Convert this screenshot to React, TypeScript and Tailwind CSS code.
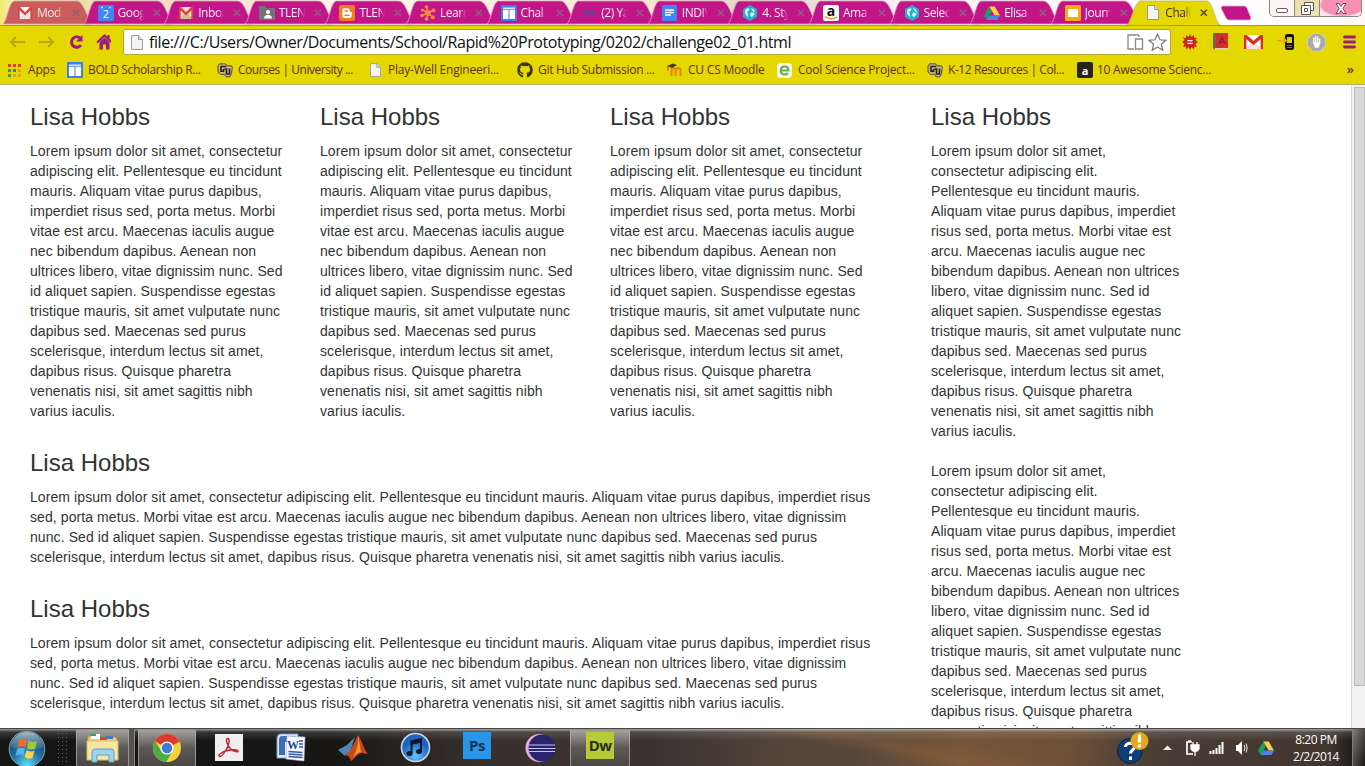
import React from "react";
import { FaGithub } from "react-icons/fa";

type P = { s?: number };

const Doc = ({ w = 12, h = 15 }: { w?: number; h?: number }) => (
  <svg width={w} height={h} viewBox="0 0 12 15" className="shrink-0">
    <path d="M.5.5h7l4 4v10H.5z" fill="#f3f3f3" stroke="#9b9b9b" />
    <path d="M7.5.5v4h4" fill="#ddd" stroke="#9b9b9b" />
  </svg>
);
const Gmail = ({ dark = "#d8483f", w = 14, h = 12, tan = false }: { dark?: string; w?: number; h?: number; tan?: boolean }) => (
  <svg width={w} height={h} viewBox="0 0 18 14" preserveAspectRatio="none" className="shrink-0">
    <rect width="18" height="14" rx="1" fill={tan ? "#f1e3c4" : "#fff"} />
    <path d="M0 14L7 7l2 2 2-2 7 7z" fill={tan ? "#d5bf8c" : "#f6e4e2"} />
    <path d="M0 0h2.600L9 6l6.400-6H18v14h-2.200V4L9 10 2.200 4v10H0z" fill={dark} />
  </svg>
);
const Calendar = () => (
  <svg width="16" height="16" viewBox="0 0 16 16">
    <rect width="16" height="16" rx="1" fill="#4486f0" />
    <path d="M3 2.500h2M11 2.500h2" stroke="#cfe0ff" strokeWidth="1.500" />
    <text x="8" y="13" fontSize="11" textAnchor="middle" fill="#fff" fontFamily="Open Sans, sans-serif">2</text>
  </svg>
);
const Classroom = () => (
  <svg width="16" height="16" viewBox="0 0 16 16">
    <path d="M0 1h6l1 2h9v12H0z" fill="#727477" />
    <circle cx="9" cy="7" r="2" fill="#fff" />
    <path d="M5 13.500c0-5 8-5 8 0z" fill="#fff" />
  </svg>
);
const Blogger = () => (
  <svg width="16" height="16" viewBox="0 0 16 16">
    <rect width="16" height="16" rx="2.500" fill="#f57d20" />
    <path d="M5.500 3.200h3a2.300 2.300 0 012.300 2.300c0 1.200.3 1.500 1.200 1.500.5 0 .8.300.8.800v2.500a2.600 2.600 0 01-2.600 2.600H5.800a2.600 2.600 0 01-2.600-2.600V5.500a2.300 2.300 0 012.300-2.300z" fill="#fff" />
    <path d="M6 6h2.500M6 10.200h4" stroke="#f57d20" strokeWidth="1.400" strokeLinecap="round" />
  </svg>
);
const Spokes = () => (
  <svg width="16" height="16" viewBox="0 0 16 16">
    <path d="M8 8L6.500 2M8 8l5-2.500M8 8l4.500 4M8 8l-1.500 6M8 8L2 10.500M8 8L2.500 5" stroke="#f28a3c" strokeWidth="1.600" />
    <g fill="#f28a3c"><circle cx="8" cy="8" r="3" /><circle cx="6.500" cy="2" r="1.800" /><circle cx="13.500" cy="5.500" r="2" /><circle cx="12.800" cy="12.300" r="2" /><circle cx="6.500" cy="14" r="1.800" /><circle cx="2" cy="10.500" r="1.800" /><circle cx="2.300" cy="5" r="1.500" /></g>
  </svg>
);
const Grid = ({ s = 16 }: P) => (
  <svg width={s} height={s} viewBox="0 0 16 16" className="shrink-0">
    <rect width="16" height="16" rx="1" fill="#3f7fea" />
    <path d="M2 5h5.500v9H2zM8.500 5H14v9H8.500z" fill="#fff" />
    <path d="M2 2.500h12v1.800H2z" fill="#dfe9fc" />
  </svg>
);
const Yahoo = () => (
  <svg width="16" height="16" viewBox="0 0 16 16">
    <path d="M1 4l4 4 2-4M5 8v4M8 7h3M8 10l3-4 2 5M12 7h3" fill="none" stroke="#5a489a" strokeWidth="1.700" />
  </svg>
);
const DocsIcon = () => (
  <svg width="15" height="16" viewBox="0 0 15 16">
    <rect width="15" height="16" rx="1" fill="#4285f4" />
    <path d="M3 5h9M3 7.500h9M3 10h6" stroke="#fff" strokeWidth="1.300" />
  </svg>
);
const Hex = () => (
  <svg width="16" height="16" viewBox="0 0 16 16">
    <path d="M8 0l7 4v8l-7 4-7-4V4z" fill="#28aecb" />
    <path d="M3 7c0-3 2.500-4.500 4-3.500s-.5 2-1.500 3 1.500 3 .5 5.500c-1.500-1-3-3-3-5zM9 3c2 .3 3.500 2 4 4l-2-.5zM9 7.500l3.500.5c0 2-1.500 3.500-3 4L8 10z" fill="#dff7fb" />
  </svg>
);
const Amazon = () => (
  <svg width="16" height="16" viewBox="0 0 16 16">
    <rect width="16" height="16" rx="2.500" fill="#fff" />
    <text x="8" y="10.500" fontSize="14" fontWeight="700" textAnchor="middle" fill="#111" fontFamily="Open Sans, sans-serif">a</text>
    <path d="M2 11.500c3.500 3 8.500 3 12 .3" stroke="#f79b1c" strokeWidth="1.600" fill="none" />
  </svg>
);
const Drive = ({ s = 16 }: P) => (
  <svg width={s} height={s} viewBox="0 0 16 16" className="shrink-0">
    <path d="M5.300 1.500L0 10.500 2.700 15 8 6z" fill="#17a35b" />
    <path d="M5.300 1.500h5.400L16 10.500h-5.300z" fill="#fdcf48" />
    <path d="M5.400 10.500H16L13.300 15H2.700z" fill="#4a86e8" />
  </svg>
);
const Slides = () => (
  <svg width="16" height="16" viewBox="0 0 16 16">
    <rect width="16" height="16" rx="1.500" fill="#f9ab13" />
    <rect x="3" y="4" width="10" height="8" fill="#fff" />
  </svg>
);
const CU = () => (
  <svg width="16" height="15" viewBox="0 0 16 15" className="shrink-0">
    <path d="M2.500.8h6l1.500 2h4.500l.8 1.500-.8 6-1.500 3.500H9l-1.500-2.500H3.500L1 9V3z" fill="#c4b184" stroke="#574a3a" />
    <path d="M8.500 4.200V3.500H4v4.800h3M6.500 6v3M7.500 6h2v5h3V5.500" fill="none" stroke="#2b241c" strokeWidth="1.600" />
  </svg>
);
const Moodle = () => (
  <svg width="16" height="14" viewBox="0 0 16 14" className="shrink-0">
    <path d="M4.500 13V7c0-2.500 4-2.500 4 0v6M8.500 7c0-2.500 5-2.500 5 0v6" fill="none" stroke="#e8841a" strokeWidth="2.200" />
    <path d="M0 3l6-2.500L10 2 5 5z" fill="#463a20" />
    <path d="M1 3v5" stroke="#7a5a20" />
  </svg>
);
const Apps = () => (
  <svg width="13" height="13" viewBox="0 0 13 13" className="shrink-0">
    {["#d9432f", "#d9432f", "#d9432f", "#3c9b4c", "#3a74d8", "#e8a01c", "#3c9b4c", "#e8a01c", "#e8a01c"].map((c, i) => (
      <rect key={i} x={(i % 3) * 5} y={Math.floor(i / 3) * 5} width="3" height="3" fill={c} />
    ))}
  </svg>
);

const tabs: { t: string; i: React.ReactNode; c: string }[] = [
  { t: "Mod", i: <Gmail />, c: "#cb5c5a" },
  { t: "Goog", i: <Calendar />, c: "#c21688" },
  { t: "Inbox", i: <Gmail tan />, c: "#c21688" },
  { t: "TLEN", i: <Classroom />, c: "#c21688" },
  { t: "TLEN", i: <Blogger />, c: "#c21688" },
  { t: "Learn", i: <Spokes />, c: "#c21688" },
  { t: "Chal", i: <Grid />, c: "#c21688" },
  { t: "(2) Ya", i: <Yahoo />, c: "#c21688" },
  { t: "INDIV", i: <DocsIcon />, c: "#c21688" },
  { t: "4. Sty", i: <Hex />, c: "#c21688" },
  { t: "Ama", i: <Amazon />, c: "#c21688" },
  { t: "Selec", i: <Hex />, c: "#c21688" },
  { t: "Elisa", i: <Drive />, c: "#c21688" },
  { t: "Journ", i: <Slides />, c: "#c21688" },
  { t: "Chall", i: <Doc />, c: "#e4d800" },
];

const Tab = ({ t, i, c, active }: { t: string; i: React.ReactNode; c: string; active: boolean }) => (
  <div className="grid h-[25px] w-[80.6px] shrink-0">
    <svg width="92" height="25" viewBox="0 0 92 25" className="overflow-visible [grid-area:1/1]">
      <path d={active ? "M-2 25.500C2 22 6 2 11 1H78C84 2 86 24 92 25.500Z" : "M2 24C6 21 8 2 13 1H76C83 2 86 18 91 24Z"} fill={c} stroke={active ? "#c5b74e" : "#dba0c0"} strokeWidth=".8" />
    </svg>
    <div className="flex h-[25px] items-center pl-[16px] [grid-area:1/1]">
      <div className="flex w-4 shrink-0 justify-center">{i}</div>
      <div className={`ml-1 w-[26px] overflow-hidden whitespace-nowrap text-[12px] leading-[18px] tracking-[-0.45px] [mask-image:linear-gradient(to_right,black_75%,transparent)] ${active ? "text-[#4f2d20]" : "text-[#fbe9f5]"}`}>{t}</div>
      <svg width="8" height="8" viewBox="0 0 8 8" className="ml-[9px] shrink-0">
        <path d="M.8.8l6 6M6.800.8l-6 6" stroke={active ? "#5e4a1c" : "#8f5f82"} strokeWidth="1.600" />
      </svg>
    </div>
  </div>
);

const marks = [
  { t: "Apps", i: <Apps />, w: "w-[59px]", g: "gap-[7px]", k: "tracking-[-0.2px]" },
  { t: "BOLD Scholarship R...", i: <Grid />, w: "w-[150px]", g: "gap-[5px]", k: "tracking-[-0.36px]" },
  { t: "Courses | University ...", i: <CU />, w: "w-[153px]", g: "gap-[5px]", k: "tracking-[-0.48px]" },
  { t: "Play-Well Engineeri...", i: <Doc w={11} h={14} />, w: "w-[147px]", g: "gap-[7px]", k: "tracking-[-0.22px]" },
  { t: "Git Hub Submission ...", i: <FaGithub size={16} color="#3b3510" className="shrink-0" />, w: "w-[150px]", g: "gap-[5px]", k: "tracking-[-0.28px]" },
  { t: "CU CS Moodle", i: <Moodle />, w: "w-[110px]", g: "gap-[5px]", k: "tracking-[-0.2px]" },
  { t: "Cool Science Project...", i: <svg width="15" height="15" viewBox="0 0 15 15" className="shrink-0"><rect width="15" height="15" rx="4" fill="#f7faec" /><path d="M3.500 7.500h8c0-5-7.500-5.500-7.800 0 .1 4.500 5 5 7.300 2.500" stroke="#67ad45" strokeWidth="2" fill="none" /></svg>, w: "w-[150px]", g: "gap-[6px]", k: "tracking-[-0.22px]" },
  { t: "K-12 Resources | Col...", i: <CU />, w: "w-[150px]", g: "gap-[5px]", k: "tracking-[-0.42px]" },
  { t: "10 Awesome Scienc...", i: <span className="flex size-4 shrink-0 items-center justify-center rounded-[2px] bg-[#28231c] text-[11px] font-bold leading-none text-white">a</span>, w: "w-[150px]", g: "gap-[4px]", k: "tracking-[-0.25px]" },
];

const narrow = [
  "Lorem ipsum dolor sit amet, consectetur",
  "adipiscing elit. Pellentesque eu tincidunt",
  "mauris. Aliquam vitae purus dapibus,",
  "imperdiet risus sed, porta metus. Morbi",
  "vitae est arcu. Maecenas iaculis augue",
  "nec bibendum dapibus. Aenean non",
  "ultrices libero, vitae dignissim nunc. Sed",
  "id aliquet sapien. Suspendisse egestas",
  "tristique mauris, sit amet vulputate nunc",
  "dapibus sed. Maecenas sed purus",
  "scelerisque, interdum lectus sit amet,",
  "dapibus risus. Quisque pharetra",
  "venenatis nisi, sit amet sagittis nibh",
  "varius iaculis.",
];
const side = [
  "Lorem ipsum dolor sit amet,",
  "consectetur adipiscing elit.",
  "Pellentesque eu tincidunt mauris.",
  "Aliquam vitae purus dapibus, imperdiet",
  "risus sed, porta metus. Morbi vitae est",
  "arcu. Maecenas iaculis augue nec",
  "bibendum dapibus. Aenean non ultrices",
  "libero, vitae dignissim nunc. Sed id",
  "aliquet sapien. Suspendisse egestas",
  "tristique mauris, sit amet vulputate nunc",
  "dapibus sed. Maecenas sed purus",
  "scelerisque, interdum lectus sit amet,",
  "dapibus risus. Quisque pharetra",
  "venenatis nisi, sit amet sagittis nibh",
  "varius iaculis.",
];
const wide = [
  "Lorem ipsum dolor sit amet, consectetur adipiscing elit. Pellentesque eu tincidunt mauris. Aliquam vitae purus dapibus, imperdiet risus",
  "sed, porta metus. Morbi vitae est arcu. Maecenas iaculis augue nec bibendum dapibus. Aenean non ultrices libero, vitae dignissim",
  "nunc. Sed id aliquet sapien. Suspendisse egestas tristique mauris, sit amet vulputate nunc dapibus sed. Maecenas sed purus",
  "scelerisque, interdum lectus sit amet, dapibus risus. Quisque pharetra venenatis nisi, sit amet sagittis nibh varius iaculis.",
];
const Text = ({ lines }: { lines: string[] }) => (
  <p className="whitespace-nowrap text-[14px] leading-5 tracking-[0.085px]">
    {lines.map((l, i) => <span key={i} className="block">{l}</span>)}
  </p>
);
const Title = () => <h3 className="mb-[11px] h-[26px] text-[24px] leading-[26px]">Lisa Hobbs</h3>;

const Explorer = () => (
  <svg width="34" height="30" viewBox="0 0 34 30">
    <path d="M2 3h10l2 2h6l1-1h8l2 2v20H2z" fill="#e9cf79" stroke="#bd9c45" />
    <path d="M5 1h9v5H5z" fill="#fff" /><path d="M5 1h5v2H5z" fill="#2ca344" /><path d="M20 3h7v3h-7z" fill="#3c7cc4" /><path d="M14 4h7v3h-7z" fill="#cb4b3b" />
    <path d="M1 8h31v19H1z" fill="#f7e6a1" stroke="#dcbd62" />
    <path d="M6 29V19q0-3 3-3h16q3 0 3 3v10h-5v-7H11v7z" fill="#9fd2ef" stroke="#5b9fcb" />
  </svg>
);
const Chrome = () => (
  <svg width="30" height="30" viewBox="0 0 30 30">
    <circle cx="15" cy="15" r="14" fill="#f8d23a" />
    <path d="M15 15L2.800 8.200A14 14 0 0127.500 8.800z" fill="#dc3b2d" />
    <path d="M2.900 8A14 14 0 0014 29l6.500-10.500L15 15 8.700 17z" fill="#4eaa46" />
    <circle cx="15" cy="15" r="6.600" fill="#f6f6f6" /><circle cx="15" cy="15" r="5.200" fill="#3c7ad3" />
  </svg>
);
const Acrobat = () => (
  <svg width="28" height="27" viewBox="0 0 28 27" className="mb-[1px]">
    <rect width="28" height="27" fill="#efefef" />
    <path d="M12.500 4.500c3-.5 1.500 7-1.500 11.500-2 3.500-5 7-6.500 6.500-2-1 2-4.500 7-5.700 5-1.300 11-1.500 11.500 0 .5 2-4.500 1-7.500-2-3-3-5.500-9.700-3-10.300z" fill="none" stroke="#c2202b" strokeWidth="1.400" />
  </svg>
);
const Word = () => (
  <svg width="30" height="30" viewBox="0 0 30 30">
    <path d="M5 1h17v24H1V6q0-5 4-5z" fill="#dfe8f5" stroke="#7da0d0" />
    <path d="M6 3h14v6H9v13H3V7q0-4 3-4z" fill="#3e6bb8" />
    <path d="M11 3l18 1-1 24-18-2z" fill="#f5f7fc" stroke="#a7b6d2" strokeWidth=".6" />
    <text x="11" y="16" fontSize="12" fontWeight="700" fill="#28479a" fontFamily="Liberation Serif, serif">W</text>
    <path d="M23 8h4M23 11h4M23 14h4M12.500 18.500l14 1M12.500 21l14 1M12.500 23.500l14 1" stroke="#36569d" strokeWidth="1.500" />
  </svg>
);
const Matlab = () => (
  <svg width="32" height="28" viewBox="0 0 32 28">
    <path d="M1 16l9-5 8-8-5 15-5 4z" fill="#4d86b5" />
    <path d="M8 21c5-2 9-12 13-20 3 3 6 15 10 19-4 0-6-2-9 0s-6 6-8 7c-1-4-3-6-6-6z" fill="#c9481b" />
    <path d="M21 1c1 8-1 17-7 25 3-5 8-8 10-8-1-6-2-12-3-17z" fill="#f49a2e" />
  </svg>
);
const ITunes = () => (
  <svg width="31" height="31" viewBox="0 0 31 31">
    <defs><radialGradient id="it" cy=".8"><stop stopColor="#64c5fa" /><stop offset="1" stopColor="#1f63c0" /></radialGradient></defs>
    <circle cx="15.500" cy="15.500" r="14" fill="url(#it)" stroke="#cad7e2" strokeWidth="1.600" />
    <path d="M11.500 21V9.500l9.500-2V19" fill="none" stroke="#10182a" strokeWidth="2" /><path d="M10.500 8.500L22 6v4.500L10.500 13z" fill="#10182a" />
    <ellipse cx="9.500" cy="21.500" rx="3" ry="2.500" fill="#10182a" /><ellipse cx="19" cy="19.500" rx="3" ry="2.500" fill="#10182a" />
  </svg>
);
const Eclipse = () => (
  <svg width="31" height="30" viewBox="0 0 31 30">
    <circle cx="14.500" cy="15" r="14" fill="#e8a9dd" /><circle cx="17" cy="15" r="13.500" fill="#29246d" />
    <path d="M4 12h26M3.500 15.500h27M4 18.500h26" stroke="#c9c5ee" strokeWidth="1.200" />
  </svg>
);
const Start = () => (
  <svg width="38" height="38" viewBox="0 0 38 38">
    <defs>
      <radialGradient id="orb" cy=".95" r=".95"><stop stopColor="#5fe0f5" /><stop offset=".45" stopColor="#246fa5" /><stop offset="1" stopColor="#17324f" /></radialGradient>
      <linearGradient id="gl" x2="0" y2="1"><stop stopColor="#dceaf2" stopOpacity=".75" /><stop offset="1" stopColor="#8bb7d2" stopOpacity=".15" /></linearGradient>
    </defs>
    <circle cx="19" cy="20" r="17.800" fill="url(#orb)" stroke="#87a4b5" />
    <path d="M2.500 18a16.500 15 0 0133 0q-16 6-33 0z" fill="url(#gl)" />
    <path d="M11 11q4-2.500 8 0l-1.500 7.500q-4-2.500-8 0z" fill="#ee6b2b" />
    <path d="M20.500 11.500q4 2.500 8.500.500l-2 8q-4 1.500-8-.5z" fill="#9dc93c" />
    <path d="M9 20q4-2.500 8 0l-1.500 7q-4-2.500-8 0z" fill="#53b2eb" />
    <path d="M18.500 21q4 2.500 8 .5l-2 7.500q-4 2-8-1z" fill="#fcd04b" />
  </svg>
);

const Slot = ({ children, on = false, w = "w-[62px]" }: { children: React.ReactNode; on?: boolean; w?: string }) => (
  <div className={`flex h-[38px] shrink-0 items-center justify-center ${w} ${on ? "rounded-[2px] border border-[#b4b1ad]/70 bg-gradient-to-b from-[#a5a29f] via-[#5b5856] to-[#4a4745]" : ""}`}>{children}</div>
);

export default function App() {
  return (
    <div className="flex h-[766px] w-[1365px] flex-col overflow-hidden bg-white font-['Open_Sans','Noto_Sans',sans-serif]">
      <header className="flex h-[85px] shrink-0 flex-col bg-[#e4d800]">
        <div className="flex h-[25px] bg-[linear-gradient(90deg,#f4e76b_0,#f5ef9f_8px,#e9dfa8_70px,#f4dfc6_180px,#fff4ee_350px,#f5e5d0_650px,#e2d5c5_760px,#fbeef3_900px,#fff_1220px,#fff8f5_1365px)] pl-[1px]">
          {tabs.map((t, i) => <Tab key={i} {...t} active={i === 14} />)}
          <svg width="32" height="21" viewBox="0 0 32 21" className="ml-[10px] shrink-0">
            <path d="M2 6h22q2 0 3 2l4 10-1 2H9q-2 0-3-2L1 8z" fill="#c21688" stroke="#d8abc6" strokeWidth=".8" />
          </svg>
          <div className="grow" />
          <div className="mr-[3px] flex h-[17px] w-[93px] shrink-0 overflow-hidden rounded-b-[5px] border border-t-0 border-[#8f8783]">
            <div className="flex w-[25px] items-center justify-center border-r border-[#8f8783] bg-[#fdf7f3]"><div className="mt-1 h-[5px] w-[12px] rounded-[2px] border border-[#665e58] bg-white" /></div>
            <div className="flex w-[25px] items-center justify-center border-r border-[#8f8783] bg-[#ebdfae]">
              <svg width="13" height="13" viewBox="0 0 13 13"><path d="M3.500 3V.5h9v8H10M.5 3.500h9v9h-9zM3.500 6.500h3v3h-3z" fill="#fff" stroke="#555" /></svg>
            </div>
            <div className="flex grow items-center justify-center bg-[radial-gradient(ellipse_at_55%_30%,#f590b4_65%,#fbe4ea_75%)]">
              <svg width="12" height="11" viewBox="0 0 12 11"><path d="M1 .5h3l2 3 2-3h3L7.800 5.500 11 10.500H8l-2-3-2 3H1l3.200-5z" fill="#fff" stroke="#655058" /></svg>
            </div>
          </div>
        </div>
        <div className="flex h-[33px] items-center border-t border-[#b59a10] pl-[9px]">
          <svg width="102" height="18" viewBox="0 0 102 18" className="shrink-0">
            <path d="M7 4L2 9l5 5M2 9h14M39 4l5 5-5 5M44 9H30" fill="none" stroke="#b5a811" strokeWidth="2" />
            <path d="M71 5A5.200 5.200 0 1072 12" fill="none" stroke="#9b1b80" strokeWidth="3" /><path d="M73.500 2v6.500H67z" fill="#9b1b80" />
            <path d="M88 9.500l7.500-7 7.500 7M99.500 2v4" stroke="#9b1b80" strokeWidth="2.200" fill="none" /><path d="M90.500 9l5-4.500 5 4.500v7.500h-3.500v-5h-3v5h-3.500z" fill="#9b1b80" />
          </svg>
          <div className="ml-[12px] flex h-[26px] w-[1048px] shrink-0 items-center rounded-[2px] border border-[#b1a538] bg-white pl-[7px] pr-[3px]">
            <Doc w={12} h={15} />
            <span className="ml-[6px] whitespace-nowrap text-[16px] leading-6 tracking-[-0.43px] text-[#111]">file:///C:/Users/Owner/Documents/School/Rapid%20Prototyping/0202/challenge02_01.html</span>
            <div className="grow" />
            <svg width="17" height="16" viewBox="0 0 17 16"><path d="M12 1H1v14h6M12 1v2M8.500 5h7v10h-7z" fill="none" stroke="#888" strokeWidth="1.300" /></svg>
            <svg width="19" height="18" viewBox="0 0 19 18" className="ml-1"><path d="M9.500 1l2.500 5.800 6 .5-4.600 4 1.400 6-5.300-3.200-5.300 3.200 1.400-6L1 7.300l6-.5z" fill="none" stroke="#777" strokeWidth="1.200" /></svg>
          </div>
          <div className="ml-[11px] flex grow items-center">
            <svg width="16" height="16" viewBox="0 0 16 16" className="shrink-0"><path d="M8 0l1.500 3L12 1v3l3-.5L13.500 6 16 8l-2.500 2 1.500 3-3-.5v3L9.500 13 8 16l-1.500-3L4 15.500v-3L1 13l1.500-3L0 8l2.500-2L1 3.500 4 4V1l2.500 2z" fill="#c92821" /><path d="M5.500 6.700h5M5.500 9.300h5" stroke="#fff" strokeWidth="1.300" /></svg>
            <svg width="17" height="18" viewBox="0 0 17 18" className="ml-[14px] shrink-0"><path d="M1 0h15v15H1z" fill="#d12f2b" /><path d="M1 0h3v15l-1 2-2-2z" fill="#76635e" /><path d="M3 15h13v2H3z" fill="#d8cfb4" /><path d="M7 11L10 4l3 7M8 9h4" stroke="#9c2020" strokeWidth="1.300" fill="none" /></svg>
            <div className="ml-[15px] flex"><Gmail w={19} h={14} dark="#dc2c22" /></div>
            <svg width="18" height="18" viewBox="0 0 18 18" className="ml-[14px] shrink-0"><rect x="8" y="1" width="9" height="16" rx="2.500" fill="#111" /><rect x="10" y="4" width="5" height="6" fill="#d8cd13" /><path d="M10 12.500h5M10 14.500h5" stroke="#777" /><path d="M0 7.500h9M6 4.500l3.500 3L6 10.500" stroke="#dca51a" strokeWidth="1.400" fill="none" /></svg>
            <svg width="19" height="19" viewBox="0 0 18 18" className="ml-[12px] shrink-0"><path d="M5.500.5h7l5 5v7l-5 5h-7l-5-5v-7z" fill="#abaaa4" stroke="#d2cfb0" /><path d="M6.300 10V5M8.200 9V3.500M10.100 9V4M12 10V6" stroke="#fff" strokeWidth="1.300" strokeLinecap="round" /><path d="M5.600 9h7l-1.500 5H7.500z" fill="#fff" /></svg>
            <svg width="13" height="14" viewBox="0 0 13 14" className="ml-[17px] shrink-0"><path d="M1.500 2h10M1.500 7h10M1.500 12h10" stroke="#97207b" strokeWidth="2.800" strokeLinecap="round" /></svg>
          </div>
        </div>
        <div className="flex h-[27px] items-center border-b border-[#b9ad6a] pb-[2px] pl-[8px]">
          {marks.map((m, i) => (
            <div key={i} className={`flex shrink-0 items-center whitespace-nowrap text-[12px] leading-4 text-[#593018] ${m.w} ${m.g} ${m.k}`}>{m.i}<span>{m.t}</span></div>
          ))}
          <span className="ml-auto mr-[11px] text-[13px] font-semibold text-[#593018]">»</span>
        </div>
      </header>

      <div className="flex min-h-0 flex-1 font-['Liberation_Sans',Arial,sans-serif] text-[#333]">
        <main className="flex min-w-0 flex-1 overflow-hidden pl-[30px]">
          <div className="w-[901px] shrink-0">
            <div className="flex">
              {[0, 1, 2].map((i) => <section key={i} className="w-[290px] pt-[19px]"><Title /><Text lines={narrow} /></section>)}
            </div>
            <section className="pt-[29px]"><Title /><Text lines={wide} /></section>
            <section className="pt-[29px]"><Title /><Text lines={wide} /></section>
          </div>
          <section className="pt-[19px]"><Title /><Text lines={side} /><div className="h-5" /><Text lines={side} /></section>
        </main>
        <div className="w-[14px] shrink-0 border-l border-[#d6d6d6] bg-[#f1f1f1] pt-[2px]">
          <div className="ml-[2px] h-[599px] w-[11px] border border-[#bcbcbc] bg-[#d8d8d8]" />
        </div>
      </div>

      <footer className="flex h-[38px] shrink-0 items-center border-t border-[#494542] bg-[linear-gradient(180deg,rgba(225,225,220,.65)_0,rgba(160,160,155,.25)_3px,transparent_12px),linear-gradient(12deg,transparent_60%,rgba(150,100,58,.35)_64%,transparent_70%),linear-gradient(100deg,transparent_850px,rgba(145,96,54,.5)_950px,rgba(130,90,53,.45)_1050px,transparent_1110px),linear-gradient(90deg,#151515_0,#151515_180px,#171615_330px,#38302b_480px,#39322f_650px,#544439_780px,#59493b_930px,#604a38_1070px,#493c34_1170px,#42352e_1330px,#211d1b_1351px)]">
        <div className="flex w-[76px] shrink-0 items-center pl-[8px]">
          <Start />
          <svg width="11" height="32" viewBox="0 0 11 32" className="ml-[11px]"><path d="M1.500 1v30M5.500 1v30M9.500 1v30" stroke="#636363" strokeDasharray="1 3" /></svg>
        </div>
        <Slot on w="w-[53px]"><Explorer /></Slot>
        <div className="mr-[3px] h-[37px] w-[6px] border-r border-[#898785] bg-[#55524f]" />
        <Slot on w="w-[58px]"><Chrome /></Slot>
        <Slot w="w-[66px]"><Acrobat /></Slot>
        <Slot w="w-[57px]"><Word /></Slot>
        <Slot w="w-[68px]"><Matlab /></Slot>
        <Slot w="w-[57px]"><ITunes /></Slot>
        <Slot w="w-[66px]"><span className="mb-[5px] flex h-[27px] w-[28px] items-center justify-center bg-[#2796e8] text-[15px] font-bold tracking-[-0.5px] text-[#12324d]">Ps</span></Slot>
        <Slot w="w-[60px]"><Eclipse /></Slot>
        <Slot on w="w-[60px]"><span className="mb-[4px] flex h-[27px] w-[28px] items-center justify-center bg-[#b7ca38] text-[15px] font-bold tracking-[-0.8px] text-[#292e17]">Dw</span></Slot>
        <div className="grow" />
        <svg width="34" height="33" viewBox="0 0 34 33" className="shrink-0">
          <circle cx="14" cy="20" r="12.500" fill="#0e3e75" stroke="#082440" /><path d="M9.500 16c0-5 9-5 9 0 0 3-4 3-4 6.500M14.500 25.500v3.500" fill="none" stroke="#fff" strokeWidth="3" />
          <circle cx="23.500" cy="10" r="9" fill="#e3a71b" /><path d="M23.500 3.500v8M23.500 13.500v3" stroke="#fff" strokeWidth="3.200" />
        </svg>
        <svg width="9" height="6" viewBox="0 0 9 6" className="ml-[13px] shrink-0"><path d="M0 5l4.500-4.500L9 5z" fill="#eee" /></svg>
        <svg width="15" height="16" viewBox="0 0 15 16" className="ml-[13px] shrink-0"><path d="M7 2H2v12h6M3 1h3" fill="none" stroke="#fff" strokeWidth="1.700" /><path d="M6 5h8v4l-2 2H8L6 9zM8 2v4M12 2v4M10 10v6" fill="#fff" stroke="#fff" strokeWidth="1.300" /></svg>
        <svg width="16" height="13" viewBox="0 0 16 13" className="ml-[9px] shrink-0"><path d="M1.500 13v-3M4.500 13V9M7.500 13V7M10.500 13V4M13.500 13V1" stroke="#fff" strokeWidth="2" /></svg>
        <svg width="12" height="14" viewBox="0 0 12 14" className="ml-[11px] shrink-0"><path d="M0 4h2l4-4v14l-4-4H0z" fill="#fff" /><path d="M8 4q2 3 0 6M10 2.500q2.500 4.500 0 9" fill="none" stroke="#eee" /></svg>
        <div className="ml-[10px] flex"><Drive s={16} /></div>
        <div className="ml-[12px] w-[60px] shrink-0 text-center text-[12px] leading-[17px] tracking-[-0.5px] text-white"><div>8:20 PM</div><div>2/2/2014</div></div>
        <div className="ml-[6px] h-[37px] w-[13px] shrink-0 border-l border-[#82796f] bg-gradient-to-br from-[#807d79] to-[#1b1918]" />
      </footer>
    </div>
  );
}
